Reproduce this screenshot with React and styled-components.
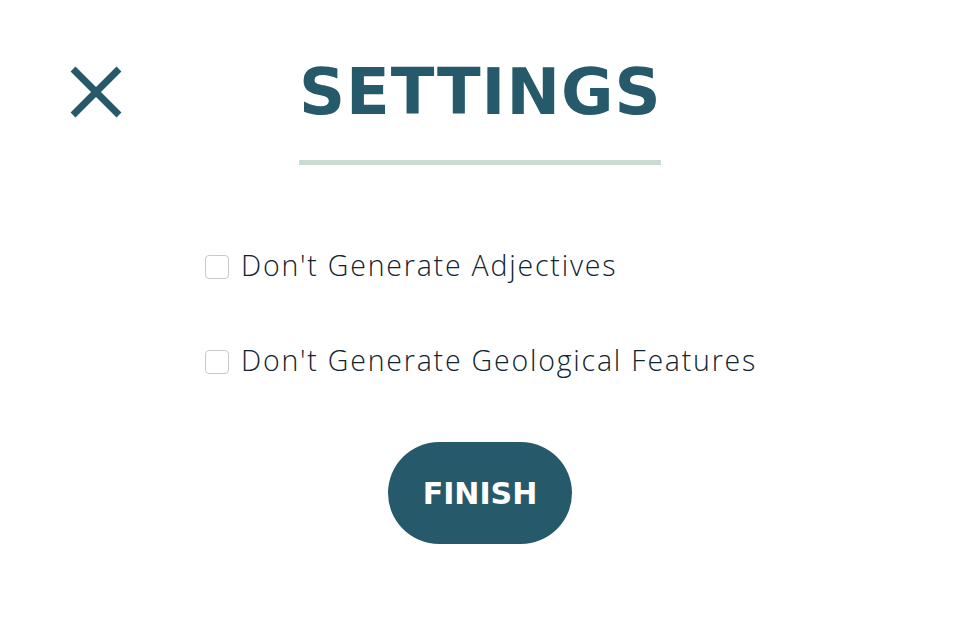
import React from 'react';
import styled, { createGlobalStyle } from 'styled-components';

const Global = createGlobalStyle`
    body {
        margin: 0;
        background: #fff;
        font-family: "Open Sans", sans-serif;
    }
`;

const Page = styled.div`
    position: relative;
    width: 960px;
    height: 640px;
    display: flex;
    flex-direction: column;
    align-items: center;
`;

const Close = styled.button`
    position: absolute;
    left: 66px;
    top: 62px;
    width: 60px;
    height: 60px;
    padding: 0;
    border: none;
    background: none;
    cursor: pointer;
`;

const Title = styled.h1`
    margin: 60px 0 0;
    padding-bottom: 36px;
    width: 362px;
    text-align: center;
    font-family: "DejaVu Sans", sans-serif;
    font-weight: bold;
    font-size: 64px;
    line-height: 64px;
    letter-spacing: 1px;
    color: #265a6b;
    border-bottom: 5px solid #c8dcd0;
`;

const Options = styled.div`
    margin-top: 76px;
    display: flex;
    flex-direction: column;
    gap: 47px;
    align-self: flex-start;
    margin-left: 205px;
`;

const Option = styled.label`
    display: flex;
    align-items: center;
    gap: 12px;
    font-family: "Open Sans", sans-serif;
    font-size: 28.5px;
    font-weight: 300;
    letter-spacing: 1.8px;
    line-height: 48px;
    color: #0f2430;
    cursor: pointer;

    input {
        appearance: none;
        margin: 0;
        width: 24px;
        height: 24px;
        border: 1px solid #c9c9c9;
        border-radius: 4px;
        background: #fff;
        margin-top: 4px;
    }
`;

const Finish = styled.button`
    margin-top: 58px;
    width: 184px;
    height: 102px;
    border: none;
    border-radius: 51px;
    background: #265a6b;
    color: #fff;
    font-family: "DejaVu Sans", sans-serif;
    font-weight: bold;
    font-size: 30px;
    cursor: pointer;
`;

export default function App() {
    return (
        <Page>
            <Global />
            <Close aria-label="close">
                <svg width="60" height="60" viewBox="0 0 60 60">
                    <path d="M7 7 L53 53 M53 7 L7 53" stroke="#265a6b" strokeWidth="7" />
                </svg>
            </Close>
            <Title>SETTINGS</Title>
            <Options>
                <Option><input type="checkbox" />Don't Generate Adjectives</Option>
                <Option><input type="checkbox" />Don't Generate Geological Features</Option>
            </Options>
            <Finish>FINISH</Finish>
        </Page>
    );
}
